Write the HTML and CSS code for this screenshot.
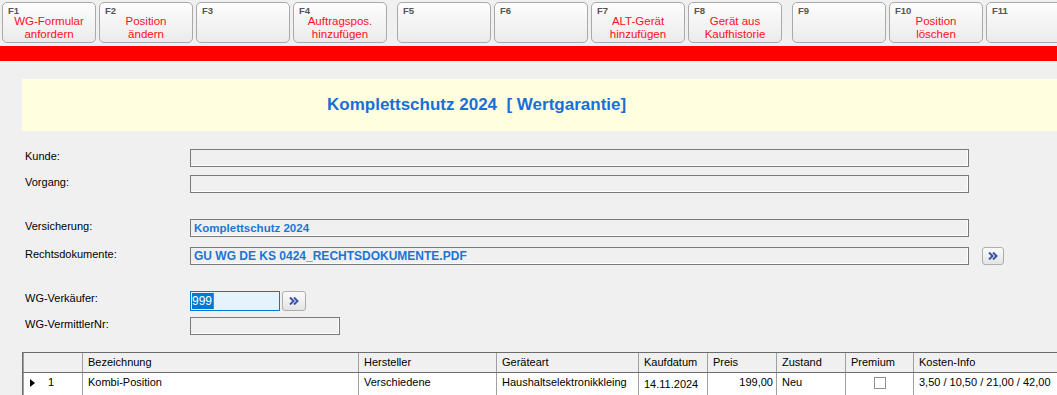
FILE: index.html
```html
<!DOCTYPE html>
<html lang="de">

<head>
    <meta charset="UTF-8">
    <meta name="viewport" content="width=device-width, initial-scale=1.0">
    <title>Komplettschutz 2024</title>
    <link rel="stylesheet" href="styles.css">
</head>

<body>
    <!-- Funktionstasten -->
    <div class="toolbar">
        <div class="key-group">
            <div class="fkey"><span class="key">F1</span>WG-Formular<br>anfordern</div>
            <div class="fkey"><span class="key">F2</span>Position<br>ändern</div>
            <div class="fkey"><span class="key">F3</span></div>
            <div class="fkey"><span class="key">F4</span>Auftragspos.<br>hinzufügen</div>
        </div>
        <div class="key-group">
            <div class="fkey"><span class="key">F5</span></div>
            <div class="fkey"><span class="key">F6</span></div>
            <div class="fkey"><span class="key">F7</span>ALT-Gerät<br>hinzufügen</div>
            <div class="fkey"><span class="key">F8</span>Gerät aus<br>Kaufhistorie</div>
        </div>
        <div class="key-group">
            <div class="fkey"><span class="key">F9</span></div>
            <div class="fkey"><span class="key">F10</span>Position<br>löschen</div>
            <div class="fkey"><span class="key">F11</span></div>
        </div>
    </div>
    <div class="redbar"></div>

    <div class="content">
        <div class="banner">Komplettschutz 2024&nbsp;&nbsp;[ Wertgarantie]</div>

        <div class="form">
            <div class="row">
                <span class="label">Kunde:</span>
                <div class="field wide"></div>
            </div>
            <div class="row gap-s">
                <span class="label">Vorgang:</span>
                <div class="field wide"></div>
            </div>
            <div class="row gap-l">
                <span class="label">Versicherung:</span>
                <div class="field wide value v-small">Komplettschutz 2024</div>
            </div>
            <div class="row gap-m">
                <span class="label">Rechtsdokumente:</span>
                <div class="field wide value v-large">GU WG DE KS 0424_RECHTSDOKUMENTE.PDF</div>
                <div class="more doc-more">
                    <svg width="10" height="8" viewBox="0 0 10 8"><path d="M1 0.5 L4.5 4 L1 7.5 M5 0.5 L8.5 4 L5 7.5" fill="none" stroke="#3b55a6" stroke-width="2"/></svg>
                </div>
            </div>
            <div class="row gap-l">
                <span class="label">WG-Verkäufer:</span>
                <div class="field active"><span class="sel">999</span></div>
                <div class="more seller-more">
                    <svg width="10" height="8" viewBox="0 0 10 8"><path d="M1 0.5 L4.5 4 L1 7.5 M5 0.5 L8.5 4 L5 7.5" fill="none" stroke="#3b55a6" stroke-width="2"/></svg>
                </div>
            </div>
            <div class="row gap-xs">
                <span class="label">WG-VermittlerNr:</span>
                <div class="field short"></div>
            </div>
        </div>

        <div class="grid-wrap">
            <table class="grid">
                <colgroup>
                    <col style="width:59px">
                    <col style="width:276px">
                    <col style="width:138px">
                    <col style="width:142px">
                    <col style="width:69px">
                    <col style="width:69px">
                    <col style="width:69px">
                    <col style="width:68px">
                    <col style="width:220px">
                </colgroup>
                <thead>
                    <tr>
                        <th class="rowhead"></th>
                        <th>Bezeichnung</th>
                        <th>Hersteller</th>
                        <th>Geräteart</th>
                        <th>Kaufdatum</th>
                        <th>Preis</th>
                        <th>Zustand</th>
                        <th>Premium</th>
                        <th>Kosten-Info</th>
                    </tr>
                </thead>
                <tbody>
                    <tr>
                        <td class="rowhead"><span class="current"></span>1</td>
                        <td>Kombi-Position</td>
                        <td>Verschiedene</td>
                        <td>Haushaltselektronikkleing</td>
                        <td class="date">14.11.2024</td>
                        <td class="num">199,00</td>
                        <td>Neu</td>
                        <td class="check"><span class="box"></span></td>
                        <td>3,50 / 10,50 / 21,00 / 42,00</td>
                    </tr>
                </tbody>
            </table>
        </div>
    </div>
</body>

</html>
```

FILE: styles.css
```css
* {
    margin: 0;
    padding: 0;
    box-sizing: border-box;
}

html,
body {
    overflow: hidden;
}

body {
    width: 1057px;
    height: 395px;
    background-color: #f0f0f0;
    font-family: "Liberation Sans", Arial, sans-serif;
    font-size: 11px;
    color: #000;
}

/* Funktionstasten */
.toolbar {
    display: flex;
    padding: 2px 0 0 2px;
    white-space: nowrap;
}

.key-group {
    display: flex;
    flex-shrink: 0;
    gap: 3px;
    margin-right: 10px;
}

.fkey {
    position: relative;
    flex-shrink: 0;
    width: 94px;
    height: 41px;
    padding-top: 12px;
    border: 1px solid #a9a9a9;
    border-radius: 5px;
    background: linear-gradient(#fdfdfd, #ebebeb);
    text-align: center;
    font-size: 11.5px;
    line-height: 13px;
    color: #ff1020;
}

.fkey .key {
    position: absolute;
    top: 2px;
    left: 5px;
    font-size: 9.5px;
    line-height: 11px;
    font-weight: bold;
    color: #555;
}

.redbar {
    height: 15px;
    margin-top: 3px;
    background-color: #ff0000;
}

.content {
    padding-left: 22px;
}

.banner {
    display: flex;
    align-items: center;
    height: 52px;
    margin-top: 18px;
    padding-left: 305px;
    background-color: #ffffe0;
    font-size: 17px;
    font-weight: bold;
    color: #1a6fd6;
}

/* Formular */
.form {
    margin-top: 18px;
    padding-left: 3px;
}

.row {
    display: flex;
    align-items: flex-start;
}

.gap-s {
    margin-top: 8px;
}

.gap-m {
    margin-top: 10px;
}

.gap-l {
    margin-top: 26px;
}

.gap-xs {
    margin-top: 6px;
}

.label {
    width: 165px;
    padding-top: 1px;
    line-height: 13px;
}

.field {
    height: 18px;
    border: 1px solid #7a7a7a;
    box-shadow: inset -1px -1px 0 #fff;
    background-color: #f0f0f0;
}

.field.wide {
    width: 779px;
}

.field.short {
    width: 150px;
}

.field.value {
    padding-left: 3px;
    line-height: 16px;
    font-weight: bold;
    color: #1b76d3;
}

.v-small {
    font-size: 11.5px;
}

.v-large {
    font-size: 12px;
}

.field.active {
    width: 90px;
    height: 20px;
    padding: 1px 0 0 1px;
    border-color: #0078d7;
    box-shadow: none;
    background-color: #e6f3fc;
}

.sel {
    display: inline-block;
    padding-right: 1px;
    border-right: 1px solid #e05a1c;
    background-color: #0078d7;
    font-size: 12px;
    line-height: 16px;
    color: #fff;
}

.more {
    display: flex;
    align-items: center;
    justify-content: center;
    height: 18px;
    border: 1px solid #adadad;
    border-radius: 3px;
    background: linear-gradient(#fbfbfb, #e4e4e4);
}

.doc-more {
    width: 22px;
    margin-left: 13px;
}

.seller-more {
    width: 24px;
    height: 20px;
    margin-left: 2px;
}

/* Tabelle */
.grid-wrap {
    width: 1100px;
    margin-top: 17px;
    border-top: 1px solid #6b6b6b;
    border-left: 1px solid #6b6b6b;
}

.grid {
    width: 1030px;
    border-collapse: collapse;
    table-layout: fixed;
    background-color: #fff;
}

.grid th {
    height: 19px;
    padding: 0 5px;
    border-right: 1px solid #a0a0a0;
    border-bottom: 1px solid #6b6b6b;
    background-color: #f0f0f0;
    font-weight: normal;
    text-align: left;
    white-space: nowrap;
    overflow: hidden;
}

.grid td {
    height: 26px;
    padding: 3px 5px 0;
    border-right: 1px solid #a0a0a0;
    vertical-align: top;
    white-space: nowrap;
    overflow: hidden;
}

.grid .rowhead {
    border-left: 1px solid #a0a0a0;
}

.grid td.rowhead {
    padding-left: 6px;
}

.current {
    display: inline-block;
    width: 0;
    height: 0;
    margin-right: 13px;
    border-top: 4px solid transparent;
    border-bottom: 4px solid transparent;
    border-left: 5px solid #000;
    vertical-align: -1px;
}

.grid td.date {
    padding-top: 5px;
}

.grid td.num {
    padding-right: 3px;
    text-align: right;
}

.grid td.check {
    padding-top: 4px;
    text-align: center;
}

.box {
    display: inline-block;
    width: 12px;
    height: 12px;
    border: 1px solid #8e8e8e;
    background-color: #fff;
}
```
